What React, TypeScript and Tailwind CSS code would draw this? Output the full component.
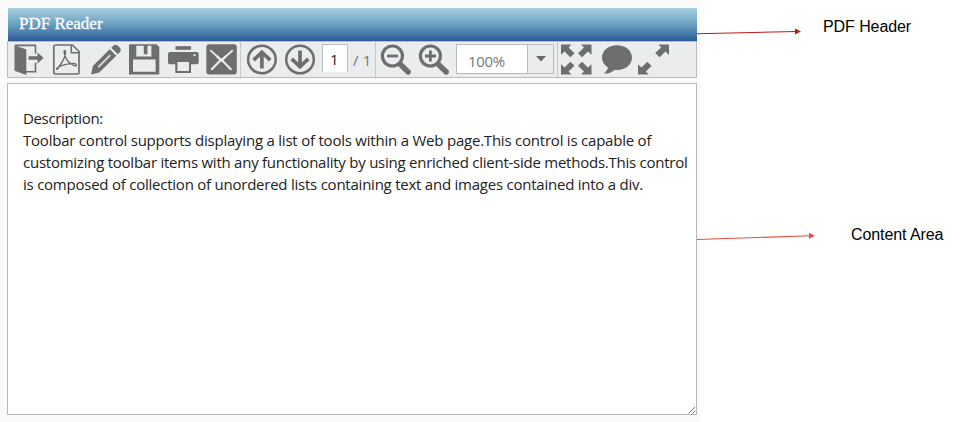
import type { ReactNode } from "react";

type IconProps = { x: number; w: number; children: ReactNode };

/* Every tool glyph is drawn in the coordinate space of the toolbar strip. */
function Tool({ x, w, children }: IconProps) {
  return (
    <svg
      width={w}
      height={35}
      viewBox={`${x} 42 ${w} 35`}
      className="block shrink-0 text-[#6e6e6e]"
      fill="currentColor"
      stroke="none"
    >
      {children}
    </svg>
  );
}

function Separator() {
  return <div className="h-[35px] w-px shrink-0 bg-[#c6c8ca]" />;
}

function Toolbar() {
  return (
    <div className="flex h-[37px] w-[690px] border border-[#bcbcbc] bg-[#ebecee]">
      <Tool x={8} w={40}>
        <path d="M14.5 45.2 26.3 49.5V75L14.5 70.7Z" />
        <path d="M15 45.4H35.5V53.5M35.5 62.5V71.8H26" fill="none" stroke="currentColor" strokeWidth="1.6" />
        <path d="M28.5 56.3H37.5V52.5L43.6 58 37.5 63.4V59.7H28.5Z" />
      </Tool>
      <Tool x={48} w={38}>
        <path d="M55 45H72.5L79 51.5V72.5Q79 74 77.5 74H55.3Q53.8 74 53.8 72.5V46.5Q53.8 45 55.3 45Z" fill="none" stroke="currentColor" strokeWidth="1.7" />
        <path d="M71.3 45.3V52.7H79" fill="none" stroke="currentColor" strokeWidth="1.5" />
        <path d="M57.4 69C59.5 65.8 65.6 58.8 65.6 52.2C65.6 49.6 63.7 50 64.2 52.3C65 57 67 63 74.3 65.6C77.5 66.4 76.7 63.2 73.5 63.4C68 63.7 62 65.1 58.5 67.1C56.3 68.4 56.2 70.1 57.4 69Z" fill="none" stroke="currentColor" strokeWidth="1.4" />
      </Tool>
      <Tool x={86} w={38}>
        <path d="M91 74.5 92.9 66 109.7 49.2 116.3 55.7 99.3 72.5Z" />
        <path d="M111.2 47.7 113 45.9Q115.5 43.6 118.2 46L119.6 47.5Q122 50 119.6 52.4L117.8 54.2Z" />
        <path d="M98.2 67.2 110.2 55.2" fill="none" stroke="#e2e3e5" strokeWidth="1.7" />
      </Tool>
      <Tool x={124} w={39}>
        <path fillRule="evenodd" d="M130 44.3H156.5L159.3 47V74.5H129V45.3Q129 44.3 130 44.3ZM133 59.5V71.8H155.6V59.5ZM136.3 45.7V56.6H151.4V45.7H147.5V54.2H143.8V45.7Z" />
      </Tool>
      <Tool x={163} w={38}>
        <path d="M175.5 46.2H191V49.8H175.5Z" />
        <path fillRule="evenodd" d="M170 52H196.5Q198.7 52 198.7 54V62.2Q198.7 64.2 196.5 64.2H191V73H175.3V64.2H170Q168 64.2 168 62.2V54Q168 52 170 52ZM177.4 62V71H189V62ZM194.5 54A1.1 1.1 0 1 0 194.5 56.3 1.1 1.1 0 1 0 194.5 54Z" />
      </Tool>
      <Tool x={201} w={39}>
        <rect x="206.3" y="44.2" width="30.5" height="30.3" rx="3" />
        <path d="M210.2 50.2 221.4 60.2 232.8 50.2" fill="none" stroke="#ebecee" strokeWidth="1.8" />
        <path d="M211.3 69.7 221.2 59.5 231.3 69.7M216.4 56 221.4 60.4 226.5 56" fill="none" stroke="#ebecee" strokeWidth="2.2" />
      </Tool>
      <Separator />
      <Tool x={241} w={40}>
        <circle cx="261.9" cy="59.5" r="13.8" fill="none" stroke="currentColor" strokeWidth="2.5" />
        <path d="M261.9 68.5V52.8M253.6 60.1 261.9 52.2 270.2 60.1" fill="none" stroke="currentColor" strokeWidth="3.7" />
      </Tool>
      <Tool x={281} w={41}>
        <circle cx="300" cy="59.5" r="13.8" fill="none" stroke="currentColor" strokeWidth="2.5" />
        <path d="M300 50.5V66.2M291.7 58.9 300 66.8 308.3 58.9" fill="none" stroke="currentColor" strokeWidth="3.7" />
      </Tool>
      <div className="mt-[2px] h-[28px] w-[26px] shrink-0 border border-b-0 border-[#bbbec1] bg-white pl-[7px] pt-[1px] font-['Open_Sans','Noto_Sans',sans-serif] text-[15px] leading-[27px] text-[#222]">
        1
      </div>
      <div className="w-[27px] shrink-0 whitespace-pre pl-[5px] pt-[6px] font-['Open_Sans','Noto_Sans',sans-serif] text-[15px] leading-[25px] tracking-[0.15px] text-[#777]">
        / 1
      </div>
      <Separator />
      <Tool x={376} w={39}>
        <circle cx="392.4" cy="56" r="10" fill="none" stroke="currentColor" strokeWidth="3.2" />
        <path d="M387 56H398" stroke="currentColor" strokeWidth="2.8" />
        <path d="M400.5 64.5 408.2 72" stroke="currentColor" strokeWidth="5.4" strokeLinecap="round" />
      </Tool>
      <Tool x={415} w={41}>
        <circle cx="430.4" cy="56" r="10" fill="none" stroke="currentColor" strokeWidth="3.2" />
        <path d="M425 56H436M430.4 50.5V61.5" stroke="currentColor" strokeWidth="2.8" />
        <path d="M438.5 64.5 446.2 72" stroke="currentColor" strokeWidth="5.4" strokeLinecap="round" />
      </Tool>
      <div className="mt-[2px] flex h-[30px] w-[98px] shrink-0 border border-[#b9bcbf] bg-white">
        <div className="w-[71px] border-r border-[#b9bcbf] pl-[11px] pt-[4px] font-['Open_Sans','Noto_Sans',sans-serif] text-[15px] leading-[25px] tracking-[-0.3px] text-[#777]">
          100%
        </div>
        <div className="flex flex-1 justify-center bg-[#ebecee] pt-[11px]">
          <svg width="10" height="6" viewBox="0 0 10 6" fill="#6a6a6a">
            <path d="M0 0H10L5 5.5Z" />
          </svg>
        </div>
      </div>
      <div className="w-[3px] shrink-0" />
      <Separator />
      <Tool x={558} w={40}>
        <path d="M561 44.5H571.5L568.6 47.4 574.5 53.3 570.3 57.2 564.5 51.4 561 54.8ZM591.5 44.5H581L584 47.4 578 53.3 582 57.2 588 51.4 591.5 54.8ZM561 74.5H571.5L568.6 71.6 574.5 65.7 570.3 61.7 564.5 67.5 561 64.2ZM591.5 74.5H581L584 71.6 578 65.7 582 61.7 588 67.5 591.5 64.2Z" />
      </Tool>
      <Tool x={598} w={36}>
        <path d="M617 45.2C625.5 45.2 632 50.5 632 57.5S625.5 70 617 70L614.5 69.9C611.8 72.2 608 73.8 603.7 73.6C606 71.9 607.4 70 608 67.5C604.2 65.3 602 61.8 602 57.5C602 50.5 608.5 45.2 617 45.2Z" />
      </Tool>
      <Tool x={634} w={40}>
        <path d="M669 44.5H658.3L661.2 47.4 655.2 53 659.5 57.2 665.5 51.5 669 55ZM638 74.5H648.7L645.8 71.6 651.5 66 647.3 61.8 641.5 67.6 638 64.2Z" />
      </Tool>
    </div>
  );
}

function Callout({ label, color, y1, y2, x2, gap }: { label: string; color: string; y1: number; y2: number; x2: number; gap: number }) {
  return (
    <div className="flex items-start">
      <svg width={x2 + gap} height="20" className="block shrink-0" fill={color}>
        <path d={`M0 ${y1}L${x2 - 5} ${y2}`} stroke={color} strokeWidth="1.1" />
        <path d={`M${x2 - 6} ${y2 - 3}L${x2} ${y2}L${x2 - 6} ${y2 + 3}Z`} />
      </svg>
      <span className="whitespace-nowrap font-['Liberation_Sans',Arial,sans-serif] text-[16px] leading-[20px] tracking-[-0.08px] text-black">
        {label}
      </span>
    </div>
  );
}

export default function App() {
  return (
    <div className="flex h-[422px] w-[978px] overflow-hidden bg-white">
      <div className="h-full w-[697px] shrink-0 bg-[#fafafa] pl-[7px] pt-[8px]">
        <div className="ml-px h-[33px] w-[689px] bg-linear-to-b from-[#a8d2df] via-[#6b9fc0] to-[#2a5b95] pl-[11px] pt-[5px] font-['Liberation_Serif',serif] text-[17px] leading-[22px] text-white">
          <span className="[-webkit-text-stroke:0.3px_white]">PDF Reader</span>
        </div>
        <Toolbar />
        <div className="mt-[5px] flex h-[332px] w-[690px] flex-col border border-[#b8b8b8] bg-white pl-[15px] pt-[23px] font-['Open_Sans','Noto_Sans',sans-serif] text-[15px] leading-[22px] text-[#222]">
          <div className="whitespace-nowrap">
            <div className="tracking-[-0.35px]">Description:</div>
            <div className="tracking-[-0.22px]">Toolbar control supports displaying a list of tools within a Web page.This control is capable of</div>
            <div className="tracking-[-0.245px]">customizing toolbar items with any functionality by using enriched client-side methods.This control</div>
            <div className="tracking-[-0.235px]">is composed of collection of unordered lists containing text and images contained into a div.</div>
          </div>
          <svg width="8" height="8" className="mt-auto ml-auto block" stroke="#777" strokeWidth="1">
            <path d="M0.5 7.5 7 1M4.5 7.5 7.5 4.5" />
          </svg>
        </div>
      </div>
      <div className="flex w-[281px] shrink-0 flex-col bg-[linear-gradient(to_right,#fafafa_3px,white_3px)] pt-[17px]">
        <Callout label="PDF Header" color="#c41818" y1={16.7} y2={14.5} x2={104} gap={22} />
        <div className="h-[188px]" />
        <Callout label="Content Area" color="#e84c46" y1={14.5} y2={10.8} x2={118} gap={36} />
      </div>
    </div>
  );
}
